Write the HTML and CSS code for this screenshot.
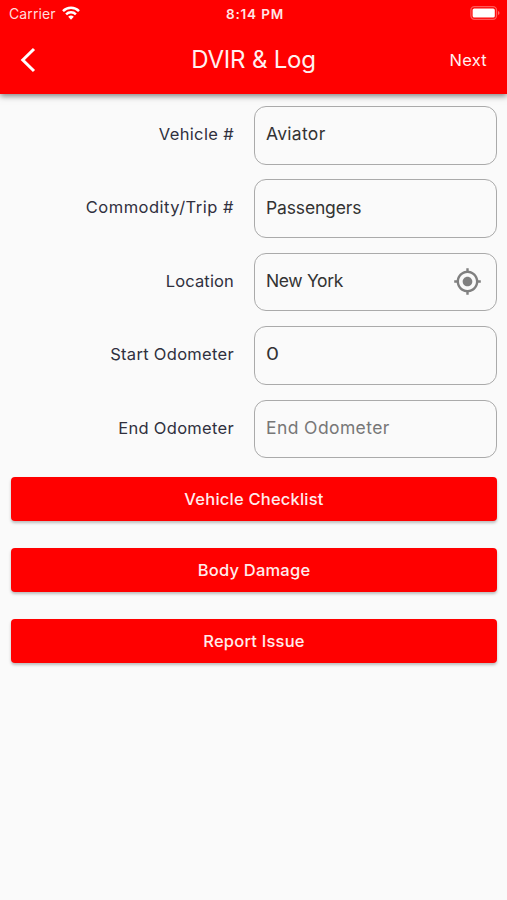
FILE: index.html
```html
<!DOCTYPE html>
<html lang="en">
<head>
<meta charset="utf-8">
<title>DVIR &amp; Log</title>
<link rel="stylesheet" href="styles.css">
</head>
<body>
<header class="header">
  <div class="status">
    <div class="carrier"><span>Carrier</span>
      <svg class="wifi" viewBox="0 0 18 14" fill="none" stroke="#fff" stroke-width="2.5"><path d="M1 5.1a11.4 11.4 0 0 1 16 0M4.1 8.3a7 7 0 0 1 9.8 0"/><path d="M6.2 10.8a4 4 0 0 1 5.6 0L9 13.7z" fill="#fff" stroke="none"/></svg>
    </div>
    <span class="time">8:14 PM</span>
    <svg class="battery" viewBox="0 0 30 14"><rect x=".9" y=".7" width="25.6" height="12.6" rx="3.5" fill="none" stroke="#ff5858" stroke-width="1.3"/><rect x="2.6" y="2.4" width="22.2" height="9.2" rx="1.6" fill="#fff"/><path d="M28 5v4q1.5-.6 1.5-2T28 5z" fill="#ff6b6b"/></svg>
  </div>
  <nav class="navbar">
    <svg class="back" viewBox="0 0 16 26" fill="none" stroke="#fff" stroke-width="3"><path d="M14 2 2.8 13 14 24"/></svg>
    <h1 class="title">DVIR &amp; Log</h1>
    <span class="next">Next</span>
  </nav>
</header>
<main class="content">
  <div class="form">
    <div class="row"><span class="label vehicle">Vehicle #</span><div class="field"><span class="aviator">Aviator</span></div></div>
    <div class="row"><span class="label commodity">Commodity/Trip #</span><div class="field"><span class="passengers">Passengers</span></div></div>
    <div class="row"><span class="label location">Location</span><div class="field"><span class="city">New York</span>
      <svg class="target" viewBox="0 0 24 24" fill="#808080"><path d="M12 8c-2.21 0-4 1.79-4 4s1.79 4 4 4 4-1.79 4-4-1.79-4-4-4zm8.94 3c-.46-4.17-3.77-7.48-7.94-7.94V1h-2v2.06C6.83 3.52 3.52 6.83 3.06 11H1v2h2.06c.46 4.17 3.77 7.48 7.94 7.94V23h2v-2.06c4.17-.46 7.48-3.77 7.94-7.94H23v-2h-2.06zM12 19c-3.87 0-7-3.13-7-7s3.13-7 7-7 7 3.13 7 7-3.13 7-7 7z"/></svg></div></div>
    <div class="row"><span class="label">Start Odometer</span><div class="field"><span class="zero">0</span></div></div>
    <div class="row"><span class="label">End Odometer</span><div class="field"><span class="placeholder">End Odometer</span></div></div>
  </div>
  <div class="actions">
    <div class="button">Vehicle Checklist</div>
    <div class="button">Body Damage</div>
    <div class="button">Report Issue</div>
  </div>
</main>
</body>
</html>
```
FILE: styles.css
```css
* { box-sizing: border-box; }
body { margin: 0; height: 900px; background: #fafafa; font-family: Inter, "Liberation Sans", sans-serif; color: #333; overflow: hidden; }
.header { height: 94px; background: #f00; color: #fff; box-shadow: 0 2px 6px rgba(0, 0, 0, .5); }
.status { height: 27px; padding: 0 7px 0 9px; display: grid; grid-template-columns: 1fr auto 1fr; align-items: center; font-size: 14px; }
.carrier { display: flex; align-items: center; gap: 6px; color: #ffdcdc; letter-spacing: .1px; }
.wifi { width: 18px; height: 14px; margin-top: -2px; }
.time { font-weight: 600; font-size: 13.5px; letter-spacing: .85px; margin-right: -1px; color: #ffe5e5; }
.battery { width: 30px; height: 14px; justify-self: end; margin-top: -1px; }
.navbar { height: 67px; padding: 0 20px 2px 20px; display: grid; grid-template-columns: 1fr auto 1fr; align-items: center; }
.back { width: 16px; height: 26px; }
.title { margin: 0; font-size: 24px; line-height: 30px; font-weight: 400; letter-spacing: -.2px; color: #fff0f0; }
.next { justify-self: end; font-size: 16.5px; letter-spacing: .25px; color: #fff0f0; }
.content { padding: 12px 10px 0 11px; }
.form { display: grid; gap: 14.8px; }
.row { display: grid; grid-template-columns: 223px 243px; gap: 20px; height: 58.6px; }
.label { justify-self: end; font-size: 16.5px; line-height: 20px; padding-top: 18px; color: #30303e; white-space: nowrap; letter-spacing: .3px; }
.vehicle { letter-spacing: .35px; }
.commodity { letter-spacing: .5px; }
.location { letter-spacing: .15px; }
.field { display: flex; align-items: center; justify-content: space-between; border: 1.3px solid #aaa; border-radius: 12px; padding: 0 14px 3px 11px; font-size: 17.5px; }
.aviator { letter-spacing: .3px; }
.passengers { letter-spacing: -.15px; }
.city { letter-spacing: -.35px; }
.zero { transform: scaleX(1.18); transform-origin: left; }
.target { width: 29px; height: 29px; margin-top: 2px; }
.placeholder { color: #777; letter-spacing: .4px; }
.actions { display: grid; gap: 26.6px; margin-top: 19px; }
.button { height: 44.2px; display: flex; align-items: center; justify-content: center; border-radius: 4px; background: #f00; color: #ffecec; font-size: 16.5px; font-weight: 500; letter-spacing: .22px; box-shadow: 0 2px 3px rgba(0, 0, 0, .25); }
```
